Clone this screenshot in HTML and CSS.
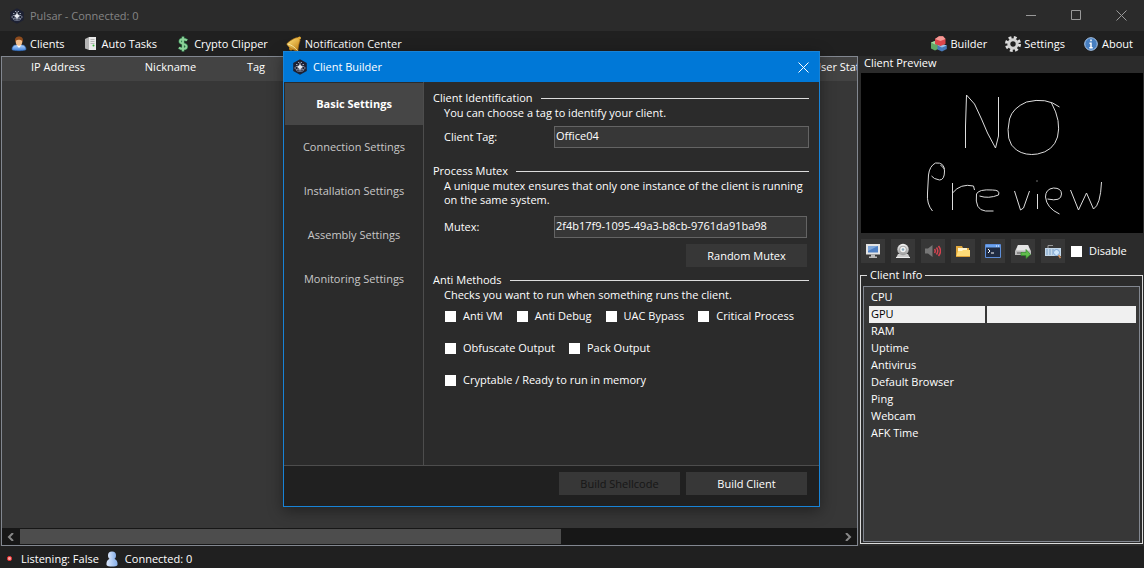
FILE: index.html
```html
<!DOCTYPE html>
<html lang="en">
<head>
  <meta charset="utf-8">
  <title>Pulsar</title>
  <link rel="stylesheet" href="styles.css">
</head>
<body>
  <svg class="defs" aria-hidden="true">
    <symbol id="pulsar" viewBox="0 0 16 16">
      <path d="M8 .3l6.800 3.800v7.800L8 15.700l-6.800-3.800V4.100z" fill="#1d2133"/>
      <ellipse cx="8" cy="9" rx="5.300" ry="2" fill="none" stroke="#8c94a8" stroke-width=".9"/>
      <ellipse cx="8" cy="11" rx="3.800" ry="1.500" fill="none" stroke="#798199" stroke-width=".8"/>
      <path d="M8 2.500l.7 3.800L11 8 8.800 9.500 8 12l-.8-2.500L5 8l2.300-1.700z" fill="#e8ebf2"/>
      <path d="M4 5.500h1.500M10.500 5.500H12M6 3.500h1M9 3.500h1" stroke="#9aa2b5"/>
    </symbol>
    <linearGradient id="blue" x2="0" y2="1"><stop stop-color="#b9d8ff"/><stop offset="1" stop-color="#3f7fd8"/></linearGradient>
    <linearGradient id="pale" x2="1" y2="0"><stop stop-color="#dbe8fc"/><stop offset="1" stop-color="#86aee8"/></linearGradient>
    <linearGradient id="gold" x2="1" y2="1"><stop stop-color="#ffe680"/><stop offset="1" stop-color="#cc8412"/></linearGradient>
    <linearGradient id="grey" x2="0" y2="1"><stop stop-color="#f7f7f7"/><stop offset="1" stop-color="#999"/></linearGradient>
  </svg>

  <div class="window">
    <header class="titlebar">
      <svg class="icon"><use href="#pulsar"/></svg>
      <span class="title">Pulsar - Connected: 0</span>
      <button class="caption" aria-label="Minimize"><svg viewBox="0 0 11 11"><path d="M0 5.500h10"/></svg></button>
      <button class="caption" aria-label="Maximize"><svg viewBox="0 0 11 11"><path d="M.5.5h9v9h-9z"/></svg></button>
      <button class="caption" aria-label="Close"><svg viewBox="0 0 11 11"><path d="M.5.5l10 10M10.500.5l-10 10"/></svg></button>
    </header>

    <nav class="menu">
      <a href="#clients">
        <svg class="icon" viewBox="0 0 16 16"><path d="M1 13.500C1 11 2.500 9 5 9h6c2.500 0 4 2 4 4.500-1 1.500-13 1.500-14 0z" fill="url(#blue)" stroke="#3874c4" stroke-width=".7"/><path d="M5.500 9L8 12l2.500-3z" fill="#fff"/><ellipse cx="8" cy="5.500" rx="3.300" ry="4.200" fill="#f2bd8b"/><path d="M4.300 6.500C3.300 2.500 5 .5 8 .5s4.700 2 3.700 6C11 4 9.500 3.500 8 3.700 6 3.500 5 4 4.300 6.500z" fill="#8d4b1d"/></svg>
        Clients</a>
      <a href="#tasks">
        <svg class="icon" viewBox="0 0 16 16"><path d="M2 3l4-2v13l-4-1.500z" fill="#b4b4b4"/><path d="M6 1h7v13H6z" fill="#e9e9e9"/><path d="M7.500 3.500h4M7.500 5.500h4M7.500 7.500h4" stroke="#aaa" stroke-width=".8"/><circle cx="10.500" cy="9.500" r="1" fill="#35b336"/></svg>
        Auto Tasks</a>
      <a href="#clipper">
        <svg class="icon" viewBox="0 0 16 16"><path d="M12 4.500C10.500 3 5 2.300 5 5.500c0 3 6.500 1.500 6.500 5 0 3.200-5.500 3-7.500 1M8 .5v15" fill="none" stroke="#358553" stroke-width="3"/><path d="M12 4.500C10.500 3 5 2.300 5 5.500c0 3 6.500 1.500 6.500 5 0 3.200-5.500 3-7.500 1M8 .8v14.400" fill="none" stroke="#8ed29a" stroke-width="1.800"/></svg>
        Crypto Clipper</a>
      <a href="#notifications">
        <svg class="icon" viewBox="0 0 16 16"><circle cx="5" cy="12.500" r="2" fill="#d99317"/><path d="M12.500 1.500C9 1.500 3 5 .8 8c1.500 3.500 6.500 6.500 11 7 .5-4.500 1.200-8 2.200-10.500z" fill="url(#gold)" stroke="#b87817" stroke-width=".7"/><path d="M1.500 8C5 8.500 9 11.500 11.500 14.500" fill="none" stroke="#fff0a8"/><circle cx="13.500" cy="2" r="1.500" fill="#e8ad35"/></svg>
        Notification Center</a>
      <a href="#builder" class="push">
        <svg class="icon" viewBox="0 0 16 16"><path d="M0 6.500L4 5l3 2v6l-3 1.500-4-2z" fill="#61a865"/><path d="M0 6.500L4 5l3 2-3 1.500z" fill="#a8d8a2"/><path d="M6.500 9.500l4.500-1.500 4.800 1.500V13L11 15.500 6.500 13.500z" fill="#4779b8"/><path d="M6.500 9.500L11 8l4.800 1.500L11 11.500z" fill="#9dc2e8"/><path d="M4 3l4-2.700h4L14.500 3v5L9.500 10 4 8z" fill="#dc464b"/><path d="M4 3l4-2.700h4L14.500 3 9.500 5z" fill="#f59a96"/></svg>
        Builder</a>
      <a href="#settings">
        <svg class="icon" viewBox="0 0 16 16"><circle cx="8" cy="8" r="6.500" fill="none" stroke="#ddd" stroke-width="3" stroke-dasharray="2.800 2.305"/><circle cx="8" cy="8" r="4.200" fill="none" stroke="#d2d2d2" stroke-width="3"/></svg>
        Settings</a>
      <a href="#about">
        <svg class="icon" viewBox="0 0 16 16"><circle cx="8" cy="8" r="6.300" fill="#477fc1" stroke="#abc9ed"/><path d="M8 3.500v1.800M6.500 7.300H8V12M6.300 11.700h3.400" stroke="#fff" stroke-width="1.500" fill="none"/></svg>
        About</a>
    </nav>

    <main class="workspace">
      <section class="clients">
        <table class="client-list">
          <thead><tr><th class="address">IP Address</th><th class="nick">Nickname</th><th class="tag">Tag</th><th></th><th class="status">User Status</th></tr></thead>
        </table>
        <div class="scrollbar">
          <button aria-label="Scroll left"><svg viewBox="0 0 8 8"><path d="M6 0L2 4l4 4"/></svg></button>
          <div class="track"><div class="thumb"></div></div>
          <button aria-label="Scroll right"><svg viewBox="0 0 8 8"><path d="M2 0l4 4-4 4"/></svg></button>
        </div>
      </section>

      <aside class="side">
        <h2>Client Preview</h2>
        <!-- hand-drawn placeholder shown while no client is selected -->
        <svg class="preview" viewBox="0 0 281 160" role="img" aria-label="No preview">
          <path d="M104 75V53l1-31M105 22l8 9 7 15 6 14 8 15 3-12V24M198 34q-13-10-33-5-14 6-17 17-5 23 7 31 9 6 21 4 16-3 20-17 4-16-6-34M71 138q-6-7-5-18l1-18q1-9 7-12 9-1 9 8 0 9-5 9-6-1-8-4M79 92l4 4M91 137v-27m0 10q8-10 21-7l1 4M118 123q9 3 19-1 2-5-6-5-14-1-16 4-2 16 9 17h8M153 118l6 19 3-2 6-17M175 108h1M176 121v15M186 126q14 3 14-5 0-6-8-6-8 1-8 9 1 11 14 17M209 117l8 20 8-17 7 16q7-4 8-27"/>
        </svg>
        <div class="tools">
          <button aria-label="Remote desktop"><svg viewBox="0 0 16 16"><path d="M1 1h14v10.500H1z" fill="#e4e4e4"/><path d="M3 3h10v6.500H3z" fill="#4e80c4"/><path d="M3 3h10L3 8z" fill="#7fa8dc"/><path d="M6 11.500h4v2h2V15H4v-1.500h2z" fill="#bbb"/></svg></button>
          <button aria-label="Webcam"><svg viewBox="0 0 16 16"><path d="M3 11h10l2 4H1z" fill="#ccc"/><path d="M1 14h14v1H1z" fill="#eee"/><circle cx="8" cy="6.500" r="5.700" fill="url(#grey)"/><circle cx="8" cy="6.500" r="3.800" fill="#aaa"/><circle cx="8" cy="6.500" r="2.800" fill="#f2f2f2"/><circle cx="8" cy="6.500" r="1.300" fill="#8ab"/></svg></button>
          <button aria-label="Audio"><svg viewBox="0 0 16 16"><path d="M0 5.500h3L7.500 2v12L3 10.500H0z" fill="#777"/><path d="M9.500 6q1.500 2 0 4M11.500 4.500q2.500 3.500 0 7M13.500 3q4 5 0 10" stroke="#d34350" stroke-width="1.500" fill="none"/></svg></button>
          <button aria-label="File manager"><svg viewBox="0 0 16 16"><path d="M1 3h6l1 2h6v9H1z" fill="#e3a93c"/><path d="M3 5h9v5H3z" fill="#fff4cc"/><path d="M1 14l2-6h4l1-1h7v7z" fill="#ffdc78"/><path d="M1 13.500h14" stroke="#dea137"/></svg></button>
          <button aria-label="Remote shell"><svg viewBox="0 0 16 16"><path d="M.5 1.500h15v13H.5z" fill="#202c43" stroke="#5e8fda"/><path d="M1 2h14v2.500H1z" fill="#6aa2ef"/><path d="M11 3h1M13 3h1" stroke="#fff"/><path d="M3 6l2 2-2 2M6 10h3" stroke="#fff" fill="none"/></svg></button>
          <button aria-label="Send file"><svg viewBox="0 0 16 16"><path d="M3 2h10l3 6v4H0V8z" fill="#bbb"/><path d="M3 2h10l2 5.500H1z" fill="#e5e5e5"/><path d="M2 10h5" stroke="#555"/><path d="M6 9.500h5v-3l4.500 5-4.500 4v-3H6z" fill="#60bd4c" stroke="#328a29" stroke-width=".7"/></svg></button>
          <button aria-label="Keylogger"><svg viewBox="0 0 16 16"><path d="M3 5V2.500h5" stroke="#999" fill="none"/><path d="M0 5h16v8H0z" fill="#c4d8ea"/><path d="M1 7h8M1 9h7M1 11h7" stroke="#7b9fc6" stroke-dasharray="2 1"/><circle cx="11.500" cy="9.500" r="3" fill="#cfe6fa" stroke="#7ca5d4"/><path d="M13.500 12l2 3" stroke="#c58b5c" stroke-width="1.700"/></svg></button>
          <label class="check"><input type="checkbox">Disable</label>
        </div>
        <fieldset class="info">
          <legend>Client Info</legend>
          <table>
            <tr><td>CPU</td><td></td></tr>
            <tr class="selected"><td>GPU</td><td></td></tr>
            <tr><td>RAM</td><td></td></tr>
            <tr><td>Uptime</td><td></td></tr>
            <tr><td>Antivirus</td><td></td></tr>
            <tr><td>Default Browser</td><td></td></tr>
            <tr><td>Ping</td><td></td></tr>
            <tr><td>Webcam</td><td></td></tr>
            <tr><td>AFK Time</td><td></td></tr>
          </table>
        </fieldset>
      </aside>
    </main>

    <footer class="statusbar">
      <span class="led"></span>
      <span>Listening: False</span>
      <svg class="icon" viewBox="0 0 16 16"><path d="M2.500 14C2 9 5 7.500 8 7.500s6 1.500 5.500 6.500c-1 2-10 2-11 0z" fill="url(#pale)"/><circle cx="8" cy="4.500" r="4" fill="url(#pale)"/></svg>
      <span>Connected: 0</span>
    </footer>
  </div>

  <div class="dialog" role="dialog" aria-labelledby="dialog-title">
    <header class="dialog-title">
      <svg class="icon"><use href="#pulsar"/></svg>
      <span id="dialog-title">Client Builder</span>
      <button aria-label="Close"><svg viewBox="0 0 11 11"><path d="M.5.5l10 10M10.500.5l-10 10"/></svg></button>
    </header>
    <div class="dialog-body">
      <div class="tabs">
        <button class="active">Basic Settings</button>
        <button>Connection Settings</button>
        <button>Installation Settings</button>
        <button>Assembly Settings</button>
        <button>Monitoring Settings</button>
      </div>
      <form class="page">
        <section class="group">
          <h3>Client Identification</h3>
          <p>You can choose a tag to identify your client.</p>
          <div class="field"><label for="tag">Client Tag:</label><input id="tag" type="text" value="Office04"></div>
        </section>
        <section class="group mutex">
          <h3>Process Mutex</h3>
          <p>A unique mutex ensures that only one instance of the client is running on the same system.</p>
          <div class="field"><label for="mutex">Mutex:</label><input id="mutex" type="text" value="2f4b17f9-1095-49a3-b8cb-9761da91ba98"></div>
          <button type="button" class="btn random">Random Mutex</button>
        </section>
        <section class="group">
          <h3>Anti Methods</h3>
          <p>Checks you want to run when something runs the client.</p>
          <div class="checks">
            <label class="check"><input type="checkbox">Anti VM</label>
            <label class="check"><input type="checkbox">Anti Debug</label>
            <label class="check"><input type="checkbox">UAC Bypass</label>
            <label class="check"><input type="checkbox">Critical Process</label>
          </div>
          <div class="checks">
            <label class="check"><input type="checkbox">Obfuscate Output</label>
            <label class="check"><input type="checkbox">Pack Output</label>
          </div>
          <div class="checks">
            <label class="check"><input type="checkbox">Cryptable / Ready to run in memory</label>
          </div>
        </section>
      </form>
    </div>
    <footer class="dialog-footer">
      <button class="btn" disabled>Build Shellcode</button>
      <button class="btn">Build Client</button>
    </footer>
  </div>
</body>
</html>
```
FILE: styles.css
```css
* {
  box-sizing: border-box;
}

body {
  margin: 0;
  background: #2b2b2b;
  color: #fff;
  font: 11px/16px "Open Sans", "Noto Sans", sans-serif;
}

button, input {
  font: inherit;
  color: inherit;
}

button {
  border: 0;
  padding: 0;
  background: none;
}

.defs {
  position: absolute;
  width: 0;
  height: 0;
}

.icon {
  width: 16px;
  height: 16px;
  flex: none;
}

.window {
  min-height: 100vh;
  display: flex;
  flex-direction: column;
}

.titlebar {
  display: flex;
  align-items: center;
  height: 31px;
  padding-left: 9px;
  color: #858585;
}

.title {
  flex: 1;
  margin-left: 5px;
}

.caption {
  width: 45px;
  height: 30px;
  display: flex;
  align-items: center;
  justify-content: center;
}

.caption svg, .dialog-title button svg {
  width: 11px;
  height: 11px;
  fill: none;
  stroke: #999;
}

.menu {
  display: flex;
  align-items: center;
  gap: 18px;
  height: 25px;
  padding: 0 11px;
  background: #202020;
}

.menu a {
  display: flex;
  align-items: center;
  gap: 3px;
  color: #fff;
  text-decoration: none;
}

.menu .push {
  margin-left: auto;
}

.workspace {
  flex: 1;
  display: flex;
}

.clients {
  flex: 1;
  min-width: 0;
  display: flex;
  flex-direction: column;
  margin-left: 1px;
  border: 1px solid #828790;
  background: #373737;
  overflow: hidden;
}

.client-list {
  width: 100%;
  table-layout: fixed;
  border-collapse: collapse;
}

.client-list th {
  height: 24px;
  padding: 0 0 4px;
  background: #434343;
  font-weight: normal;
  white-space: nowrap;
}

.address {
  width: 112px;
}

.nick {
  width: 113px;
}

.tag {
  width: 58px;
}

.client-list .status {
  width: 44px;
  overflow: hidden;
  text-align: left;
}

.scrollbar {
  display: flex;
  height: 17px;
  margin-top: auto;
  background: #171717;
}

.scrollbar button {
  width: 18px;
}

.scrollbar svg {
  width: 8px;
  height: 8px;
  fill: none;
  stroke: #888;
  stroke-width: 2;
}

.track {
  flex: 1;
}

.thumb {
  width: 66%;
  height: 15px;
  margin-top: 1px;
  background: #4d4d4d;
}

.side {
  width: 286px;
  display: flex;
  flex-direction: column;
  padding: 0 1px 2px 2px;
}

.side h2 {
  margin: -1px 0 2px 4px;
  font-size: 11px;
  font-weight: normal;
  line-height: 16px;
}

.preview {
  height: 160px;
  margin-left: 1px;
  background: #000;
  fill: none;
  stroke: #ddd;
  stroke-width: 1;
}

.tools {
  display: flex;
  align-items: center;
  gap: 6px;
  margin-left: 1px;
  padding: 6px 0 4px;
}

.tools button {
  display: flex;
  align-items: center;
  justify-content: center;
  width: 24px;
  height: 24px;
  background: #373737;
}

.tools svg {
  width: 16px;
  height: 16px;
}

.check {
  display: flex;
  align-items: center;
  gap: 7px;
}

.check input {
  appearance: none;
  width: 11px;
  height: 11px;
  margin: 0;
  background: #fff;
}

.info {
  flex: 1;
  min-width: 0;
  margin: 0;
  padding: 3px 2px 1px;
  border: 1px solid #dcdcdc;
  display: flex;
}

.info legend {
  margin-left: 4px;
  padding: 0 3px;
}

.info table {
  flex: 1;
  display: block;
  padding: 2px 3px 2px 5px;
  border: 1px solid #828790;
  background: #373737;
  border-spacing: 0;
}

.info tbody {
  display: grid;
}

.info tr {
  display: grid;
  grid-template-columns: 116px 1fr;
  gap: 2px;
  height: 17px;
}

.info td {
  padding: 0 2px;
}

.selected td {
  background: #f0f0f0;
  color: #000;
}

.statusbar {
  display: flex;
  align-items: center;
  gap: 5px;
  height: 22px;
  padding: 3px 0 0 7px;
  background: #202020;
}

.led {
  width: 5px;
  height: 5px;
  margin-right: 4px;
  border: 1px solid #e03030;
  border-radius: 2px;
  background: #ffa0a0;
}

/* the builder floats over the main window */
.dialog {
  position: absolute;
  top: 51px;
  left: 50%;
  width: 537px;
  margin-left: -289px;
  border: 1px solid #1883d7;
  background: #2b2b2b;
  box-shadow: 0 4px 14px rgba(0, 0, 0, 0.4);
}

.dialog-title {
  display: flex;
  align-items: center;
  gap: 5px;
  height: 30px;
  padding: 0 10px 0 8px;
  background: #0078d7;
}

.dialog-title button {
  margin-left: auto;
}

.dialog-title button svg {
  display: block;
  stroke: #fff;
}

.dialog-body {
  display: flex;
  min-height: 384px;
  border-bottom: 1px solid #4d4d4d;
}

.tabs {
  width: 140px;
  padding: 1px 0 1px 1px;
  border-right: 1px solid #4d4d4d;
}

.tabs button {
  display: block;
  width: 100%;
  height: 44px;
  color: #c8c8c8;
}

.tabs .active {
  height: 42px;
  background: #464646;
  color: #fff;
  font-weight: bold;
}

.page {
  flex: 1;
  padding: 8px 10px 0 9px;
}

.group {
  margin-bottom: 15px;
}

.group h3 {
  display: flex;
  align-items: center;
  gap: 8px;
  margin: 0;
  font-size: 11px;
  font-weight: normal;
  line-height: 16px;
}

.group h3::after {
  content: "";
  flex: 1;
  height: 1px;
  background: #dcdcdc;
}

.group p {
  margin: 0 0 0 11px;
  line-height: 14px;
}

.field {
  display: flex;
  align-items: center;
  margin: 6px 0 0 11px;
}

.field label {
  width: 110px;
}

.field input {
  flex: 1;
  min-width: 0;
  height: 22px;
  padding: 0 1px 4px;
  border: 1px solid #646464;
  background: #373737;
}

.mutex {
  margin-bottom: 5px;
}

.mutex .field {
  margin: 9px 2px 0 11px;
}

.btn {
  width: 121px;
  height: 23px;
  background: #373737;
}

.random {
  display: block;
  margin: 6px 2px 0 auto;
}

.btn:disabled {
  color: #161616;
}

.checks {
  display: flex;
  gap: 14px;
  margin: 6px 0 16px 12px;
}

.dialog-footer {
  display: flex;
  justify-content: flex-end;
  gap: 6px;
  padding: 6px 12px 11px;
  background: #202020;
}
```
